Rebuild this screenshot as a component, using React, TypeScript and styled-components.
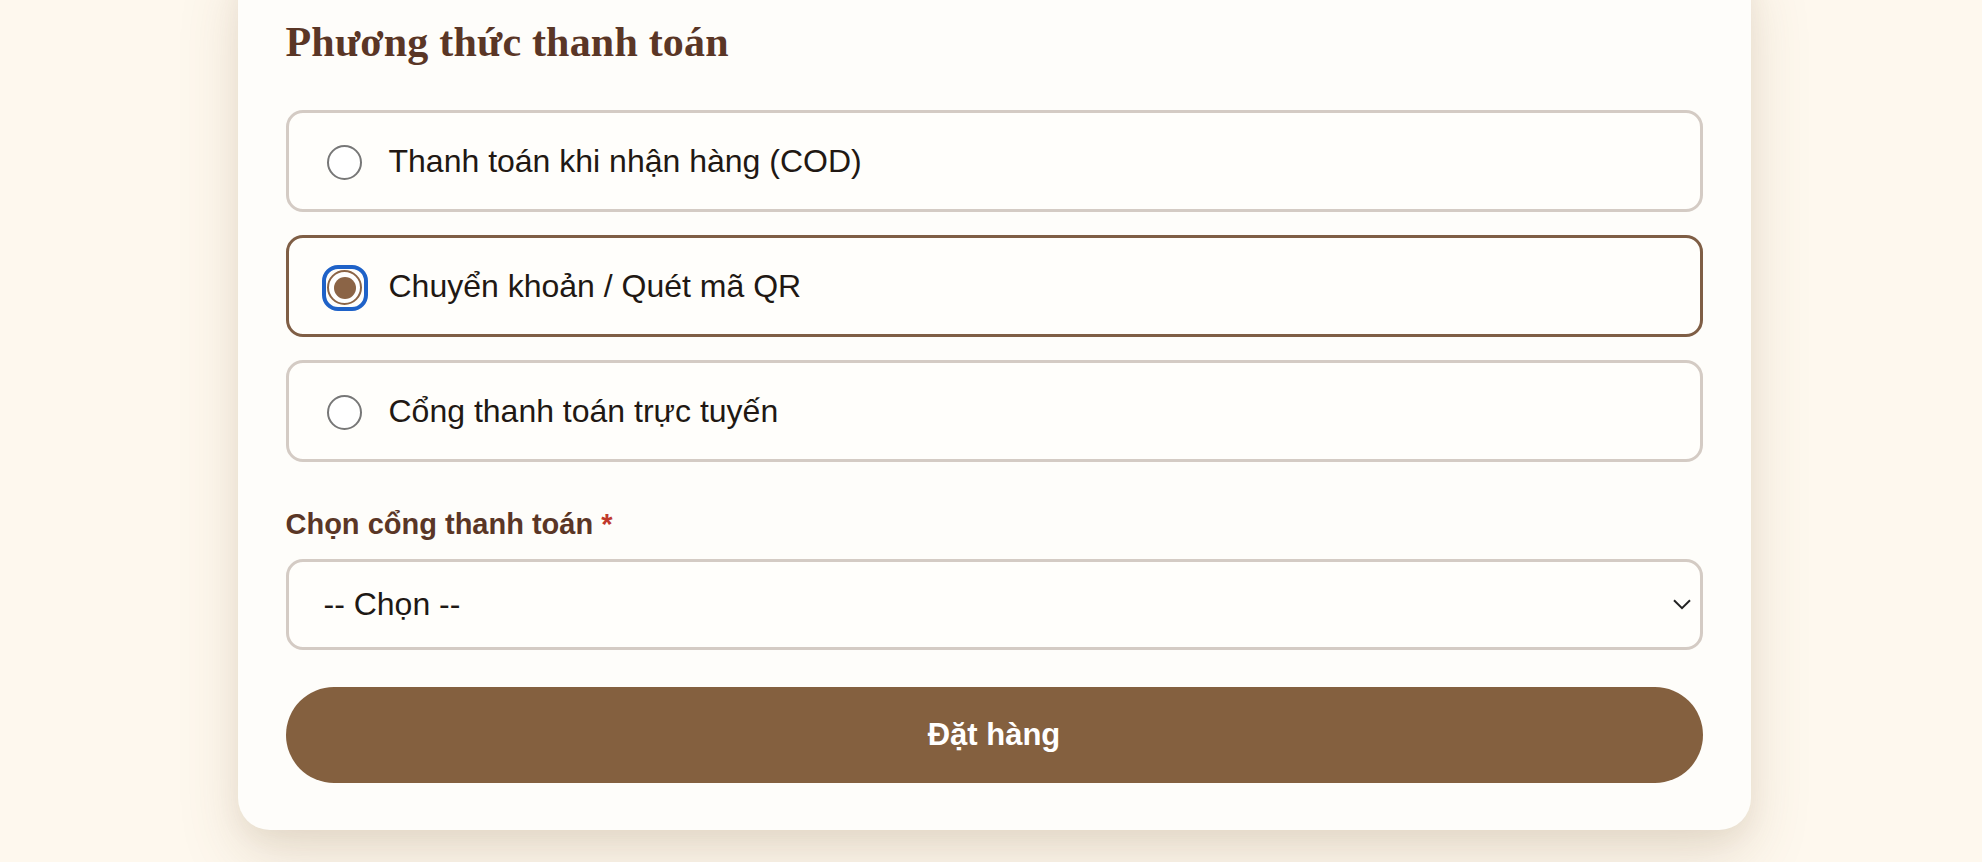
import { useState } from 'react'
import styled, { createGlobalStyle } from 'styled-components'

const PAYMENT_METHODS = [
  { id: 'cod', label: 'Thanh toán khi nhận hàng (COD)' },
  { id: 'bank', label: 'Chuyển khoản / Quét mã QR' },
  { id: 'gateway', label: 'Cổng thanh toán trực tuyến' },
]

function App() {
  const [method, setMethod] = useState('bank')

  return (
    <>
      <GlobalStyle />
      <Page>
        <Card>
          <Title>Phương thức thanh toán</Title>
          <OptionList>
            {PAYMENT_METHODS.map((item) => (
              <Option
                key={item.id}
                $active={method === item.id}
                onClick={() => setMethod(item.id)}
              >
                <RadioFocus $focused={method === item.id}>
                  <Radio $checked={method === item.id} />
                </RadioFocus>
                <OptionText>{item.label}</OptionText>
              </Option>
            ))}
          </OptionList>

          <Field>
            <Label>
              Chọn cổng thanh toán <Required>*</Required>
            </Label>
            <SelectBox>
              <SelectValue>-- Chọn --</SelectValue>
              <svg width="18" height="11" viewBox="0 0 18 11" fill="none">
                <path d="M1 1.2L9 9.2L17 1.2" stroke="#222" strokeWidth="2" />
              </svg>
            </SelectBox>
          </Field>

          <SubmitButton type="button">Đặt hàng</SubmitButton>
        </Card>
      </Page>
    </>
  )
}

export default App

const GlobalStyle = createGlobalStyle`
  html, body {
    margin: 0;
    padding: 0;
    background: #fef8ee;
  }

  * {
    box-sizing: border-box;
  }
`

// the checkout page is scrolled down: the card's top edge sits above the fold
const Page = styled.div`
  height: 862px;
  overflow: hidden;
  padding-left: 6px;
  font-family: 'Liberation Sans', Arial, sans-serif;
`

const Card = styled.div`
  width: 1513px;
  margin: -48px auto 0;
  padding: 65px 48px 47px;
  background: #fefdfa;
  border-radius: 32px;
  box-shadow: 0 26px 60px rgba(120, 88, 50, 0.17), 0 8px 24px rgba(120, 88, 50, 0.06);
`

const Title = styled.h2`
  margin: 0 0 43px;
  font-family: 'Liberation Serif', 'Times New Roman', serif;
  font-size: 42px;
  font-weight: 700;
  line-height: 50px;
  letter-spacing: 0.2px;
  color: #5a3626;
`

const OptionList = styled.div`
  display: flex;
  flex-direction: column;
  gap: 23px;
`

const Option = styled.label<{ $active: boolean }>`
  display: flex;
  align-items: center;
  gap: 21px;
  height: 102px;
  padding: 0 33px;
  border: 3px solid ${({ $active }) => ($active ? '#7f5e45' : '#d4cbc4')};
  border-radius: 17px;
  background: #fffefb;
  cursor: pointer;
`

const RadioFocus = styled.span<{ $focused: boolean }>`
  display: flex;
  flex-shrink: 0;
  margin-top: 3px;
  padding: 1.5px;
  border: 4px solid ${({ $focused }) => ($focused ? '#1f62c8' : 'transparent')};
  border-radius: 16px;
`

const Radio = styled.span<{ $checked: boolean }>`
  position: relative;
  width: 35px;
  height: 35px;
  border-radius: 50%;
  border: ${({ $checked }) => ($checked ? '2.5px solid #8b6446' : '2px solid #777777')};
  background: #ffffff;

  &::after {
    content: '';
    position: absolute;
    inset: 4.5px;
    border-radius: 50%;
    background: #8b6446;
    display: ${({ $checked }) => ($checked ? 'block' : 'none')};
  }
`

const OptionText = styled.span`
  font-size: 32px;
  color: #211813;
`

const Field = styled.div`
  margin-top: 45px;
`

const Label = styled.label`
  display: block;
  margin-bottom: 17px;
  font-size: 29px;
  font-weight: 700;
  line-height: 1.2;
  color: #5a3626;
`

const Required = styled.span`
  color: #c0392b;
`

const SelectBox = styled.div`
  display: flex;
  align-items: center;
  justify-content: space-between;
  height: 91px;
  padding: 0 9px 0 35px;
  border: 3px solid #d4cbc4;
  border-radius: 17px;
  background: #fffefb;
`

const SelectValue = styled.span`
  font-size: 32px;
  color: #1e1814;
`

const SubmitButton = styled.button`
  display: block;
  width: 100%;
  height: 96px;
  margin-top: 37px;
  border: none;
  border-radius: 48px;
  background: #84603f;
  color: #ffffff;
  font-family: 'Liberation Sans', Arial, sans-serif;
  font-size: 31px;
  font-weight: 700;
  cursor: pointer;
`
